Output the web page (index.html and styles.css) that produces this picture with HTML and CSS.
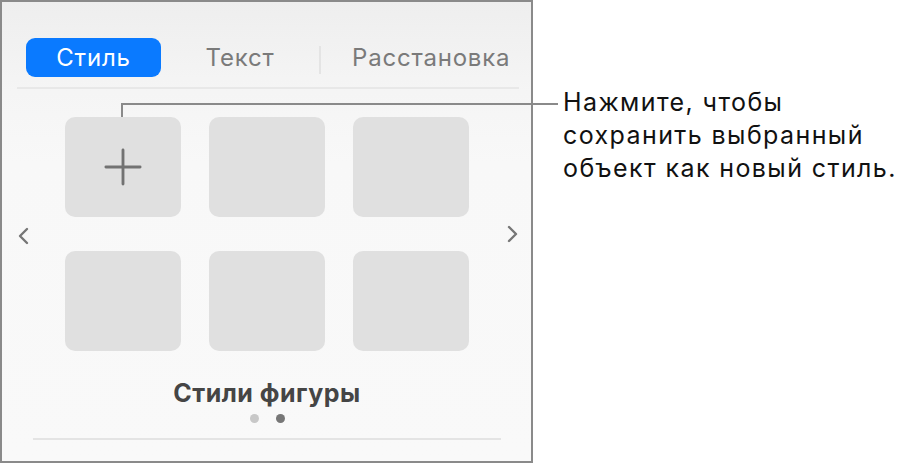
FILE: index.html
```html
<!DOCTYPE html>
<html lang="ru">
<head>
<meta charset="utf-8">
<title>Стили фигуры</title>
<link rel="stylesheet" href="styles.css">
</head>
<body>
<div class="page">
  <section class="panel">
    <nav class="tabs">
      <button class="tab tab-active">Стиль</button>
      <button class="tab tab-text">Текст</button>
      <span class="tab-sep"></span>
      <button class="tab tab-arrange">Расстановка</button>
    </nav>
    <div class="tabs-rule"></div>

    <div class="carousel">
      <svg class="chevron chevron-left" width="12" height="18" viewBox="0 0 12 18">
        <path d="M10 2 L3 9 L10 16" fill="none" stroke="#767676" stroke-width="2.4" stroke-linecap="round" stroke-linejoin="round"/>
      </svg>
      <div class="styles-grid">
        <div class="style-tile add-tile">
          <svg width="40" height="40" viewBox="0 0 40 40">
            <path d="M20 2 V38 M2 20 H38" stroke="#727272" stroke-width="3" stroke-linecap="round"/>
          </svg>
        </div>
        <div class="style-tile"></div>
        <div class="style-tile"></div>
        <div class="style-tile"></div>
        <div class="style-tile"></div>
        <div class="style-tile"></div>
      </div>
      <svg class="chevron chevron-right" width="12" height="18" viewBox="0 0 12 18">
        <path d="M2 2 L9 9 L2 16" fill="none" stroke="#767676" stroke-width="2.4" stroke-linecap="round" stroke-linejoin="round"/>
      </svg>
    </div>

    <h2 class="section-title">Стили фигуры</h2>
    <div class="pager">
      <span class="dot"></span>
      <span class="dot dot-current"></span>
    </div>
    <div class="bottom-rule"></div>
  </section>

  <p class="callout-text">Нажмите, чтобы<br>сохранить выбранный<br>объект как новый стиль.</p>
  <div class="callout-line"></div>
</div>
</body>
</html>
```

FILE: styles.css
```css
* {
  box-sizing: border-box;
}

html, body {
  margin: 0;
  padding: 0;
  background: #fff;
}

body {
  font-family: Inter, Roboto, "Noto Sans", sans-serif;
  width: 904px;
  height: 463px;
  overflow: hidden;
}

.page {
  position: relative;
  display: flex;
  align-items: flex-start;
  height: 463px;
}

/* Inspector panel */
.panel {
  width: 533px;
  height: 463px;
  flex: none;
  border: 2px solid #8a8a8a;
  background: linear-gradient(#eeeeee 0, #f5f5f5 90px, #f8f8f8 160px, #f9f9f9 100%);
  display: flex;
  flex-direction: column;
}

.tabs {
  display: flex;
  align-items: center;
  margin-top: 36px;
  padding-left: 24px;
  height: 39px;
}

.tab {
  font-family: inherit;
  font-size: 24px;
  letter-spacing: 0.8px;
  color: #7a7a7a;
  background: none;
  border: 0;
  padding: 0;
  height: 39px;
  line-height: 39px;
  cursor: pointer;
}

.tab-active {
  width: 135px;
  background: #0a7aff;
  color: #fff;
  border-radius: 9px;
}

.tab-text {
  width: 158px;
  text-align: center;
}

.tab-sep {
  width: 2px;
  height: 28px;
  margin-top: 5px;
  background: #e4e4e4;
}

.tab-arrange {
  padding-left: 31px;
}

.tabs-rule {
  height: 2px;
  margin: 10px 12px 0 15px;
  background: #e8e8e8;
}

/* Style thumbnails */
.carousel {
  display: flex;
  align-items: center;
  margin-top: 28px;
  padding-left: 15px;
}

.chevron {
  flex: none;
  display: block;
}

.chevron-left {
  margin-top: 4px;
}

.chevron-right {
  margin-left: 38px;
}

.styles-grid {
  margin-left: 36px;
  display: grid;
  grid-template-columns: repeat(3, 116px);
  grid-auto-rows: 100px;
  column-gap: 28px;
  row-gap: 34px;
}

.style-tile {
  background: #e0e0e0;
  border-radius: 10px;
}

.add-tile {
  display: flex;
  align-items: center;
  justify-content: center;
}

.add-tile svg {
  width: 38px;
  height: 38px;
}

.section-title {
  margin: 27px 0 0;
  text-align: center;
  font-size: 25px;
  font-weight: 700;
  letter-spacing: 0.5px;
  color: #454545;
  line-height: 30px;
  padding-left: 1px;
}

.pager {
  display: flex;
  justify-content: center;
  gap: 17px;
  margin-top: 6px;
  padding-left: 1px;
}

.dot {
  width: 9px;
  height: 9px;
  border-radius: 50%;
  background: #c8c8c8;
}

.dot-current {
  background: #777;
}

.bottom-rule {
  height: 2px;
  margin: 15px 30px 0 31px;
  background: #e4e4e4;
}

/* Callout */
.callout-text {
  margin: 0 0 0 30px;
  padding-top: 86px;
  font-size: 25px;
  letter-spacing: 1.4px;
  line-height: 33px;
  color: #111;
}

.callout-line {
  position: absolute;
  left: 121px;
  top: 103px;
  width: 437px;
  height: 14px;
  border-top: 2px solid #8a8a8a;
  border-left: 2px solid #8a8a8a;
}
```
